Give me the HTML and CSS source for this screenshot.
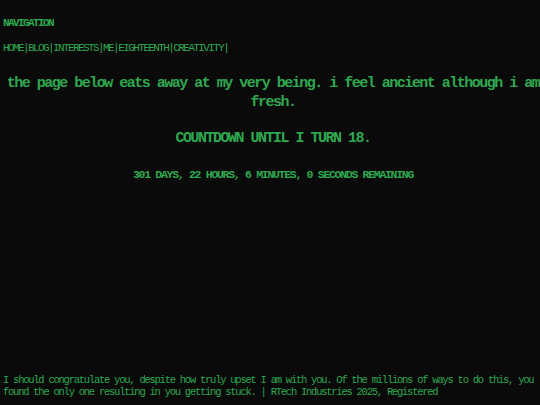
FILE: index.html
```html
<!DOCTYPE html>
<html lang="en">
<head>
<meta charset="utf-8">
<title>Countdown</title>
<link rel="stylesheet" href="styles.css">
</head>
<body>
<header class="site-nav">
  <div class="nav-title">NAVIGATION</div>
  <nav class="nav-links"><a href="#">HOME</a>|<a href="#">BLOG</a>|<a href="#">INTERESTS</a>|<a href="#">ME</a>|<a href="#">EIGHTEENTH</a>|<a href="#">CREATIVITY</a>|</nav>
</header>
<main class="content">
  <p class="tagline">the page below eats away at my very being. i feel ancient although i am fresh.</p>
  <h1 class="countdown-title">COUNTDOWN UNTIL I TURN 18.</h1>
  <p class="countdown-detail">301 DAYS, 22 HOURS, 6 MINUTES, 0 SECONDS REMAINING</p>
</main>
<footer class="site-footer">I should congratulate you, despite how truly upset I am with you. Of the millions of ways to do this, you found the only one resulting in you getting stuck. | RTech Industries 2025, Registered</footer>
</body>
</html>
```
FILE: styles.css
```css
html, body {
  background: #0a0a0a;
}
body {
  margin: 0;
  padding: 0 0 7px 3px;
  min-height: 100vh;
  box-sizing: border-box;
  display: flex;
  flex-direction: column;
  overflow: hidden;
  color: #2fa84f;
  font-family: "Liberation Mono", "DejaVu Sans Mono", monospace;
}
.site-nav {
  padding-top: 17px;
}
.nav-title {
  font-size: 11px;
  line-height: 12px;
  font-weight: bold;
  letter-spacing: -1.6px;
}
.nav-links {
  margin-top: 13px;
  font-size: 11px;
  line-height: 12px;
  letter-spacing: -1.6px;
}
.nav-links a {
  color: inherit;
  text-decoration: none;
}
.content {
  margin-left: 3px;
  text-align: center;
}
.tagline {
  margin: 20px 0 0;
  font-size: 15px;
  line-height: 19px;
  font-weight: bold;
  letter-spacing: -1.5px;
}
.countdown-title {
  margin: 17px 0 0;
  font-size: 15px;
  line-height: 19px;
  font-weight: bold;
  letter-spacing: -1.5px;
}
.countdown-detail {
  margin: 20px 0 0;
  font-size: 11.5px;
  line-height: 14px;
  font-weight: bold;
  letter-spacing: -1.3px;
}
.site-footer {
  margin-top: auto;
  font-size: 10.5px;
  line-height: 12px;
  letter-spacing: -1.25px;
}
```
